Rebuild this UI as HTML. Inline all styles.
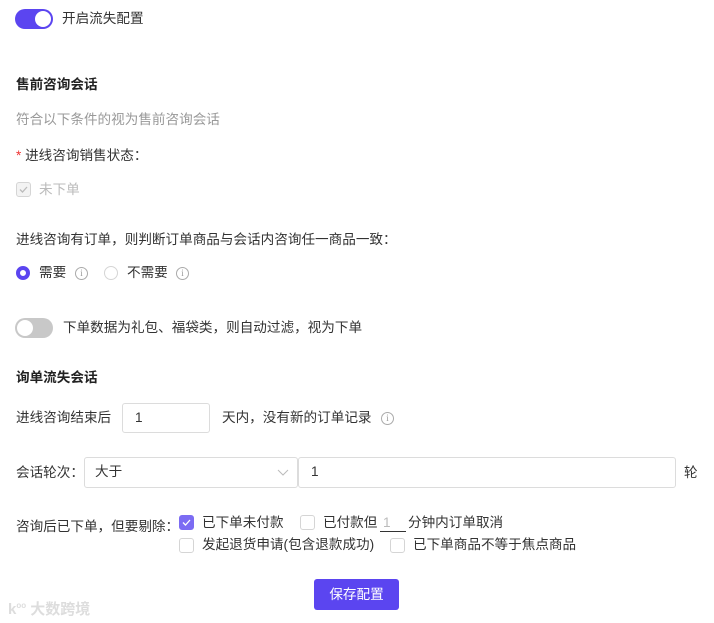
<!DOCTYPE html>
<html><head><meta charset="utf-8"><style>
*{box-sizing:border-box;margin:0;padding:0}
body{width:714px;height:623px;background:#fff;position:relative;overflow:hidden;font-family:"Liberation Sans","Noto Sans CJK SC",sans-serif;font-size:13.6px;color:#333}
.a{position:absolute;white-space:nowrap;line-height:18px}
.b{font-weight:bold;color:#222}
.g{color:#999}
.sw{position:absolute;width:38px;height:20px;border-radius:10px}
.sw i{position:absolute;top:2px;width:16px;height:16px;border-radius:50%;background:#fff}
.cb{position:absolute;width:15px;height:15px;border:1px solid #d5d5d5;border-radius:3px;background:#fff}
.info{position:absolute;width:13px;height:13px;border:1px solid #aaa;border-radius:50%;font-size:9px;line-height:11px;text-align:center;color:#999;font-family:"Liberation Serif",serif}
.inp{position:absolute;border:1px solid #dcdcdc;border-radius:3px;background:#fff;line-height:28px;padding-left:12px;color:#333}
</style></head><body>
<div class="sw" style="left:15px;top:9px;background:#5b45f0"><i style="left:20px"></i></div>
<div class="a" style="left:62px;top:10px;color:#333">开启流失配置</div>

<div class="a b" style="left:16px;top:76px">售前咨询会话</div>
<div class="a g" style="left:16px;top:111px">符合以下条件的视为售前咨询会话</div>
<div class="a" style="left:16px;top:147px"><span style="color:#e33">*</span> 进线咨询销售状态：</div>
<div class="cb" style="left:16px;top:182px;background:#f3f3f3"><svg width="13" height="13" style="position:absolute;left:0;top:0"><path d="M3 6.5l2.5 2.5 4.5-5" stroke="#bbb" stroke-width="1.3" fill="none"/></svg></div>
<div class="a" style="left:39px;top:181px;color:#bbb">未下单</div>

<div class="a" style="left:16px;top:231px">进线咨询有订单，则判断订单商品与会话内咨询任一商品一致：</div>
<div style="position:absolute;left:16px;top:266px;width:14px;height:14px;border-radius:50%;border:4px solid #5b45f0;background:#fff"></div>
<div class="a" style="left:39px;top:264px">需要</div>
<div class="info" style="left:75px;top:267px">i</div>
<div style="position:absolute;left:104px;top:266px;width:14px;height:14px;border-radius:50%;border:1px solid #d5d5d5"></div>
<div class="a" style="left:127px;top:264px">不需要</div>
<div class="info" style="left:176px;top:267px">i</div>

<div class="sw" style="left:15px;top:318px;background:#c8c8c8"><i style="left:2px"></i></div>
<div class="a" style="left:63px;top:319px">下单数据为礼包、福袋类，则自动过滤，视为下单</div>

<div class="a b" style="left:16px;top:369px">询单流失会话</div>
<div class="a" style="left:16px;top:409px">进线咨询结束后</div>
<div class="inp" style="left:122px;top:403px;width:88px;height:30px">1</div>
<div class="a" style="left:222px;top:409px">天内，没有新的订单记录</div>
<div class="info" style="left:381px;top:412px">i</div>

<div class="a" style="left:16px;top:464px">会话轮次：</div>
<div class="inp" style="left:84px;top:457px;width:214px;height:31px;padding-left:10px">大于
<svg width="12" height="8" style="position:absolute;right:8px;top:11px"><path d="M1 1l5 5 5-5" stroke="#bbb" fill="none"/></svg></div>
<div class="inp" style="left:298px;top:457px;width:378px;height:31px;padding-left:12px">1</div>
<div class="a" style="left:684px;top:464px">轮</div>

<div class="a" style="left:16px;top:518px">咨询后已下单，但要剔除：</div>
<div class="cb" style="left:179px;top:515px;background:#7c6cf3;border-color:#7c6cf3"><svg width="13" height="13" style="position:absolute;left:0;top:0"><path d="M3 6.5l2.5 2.5 4.5-5" stroke="#fff" stroke-width="1.3" fill="none"/></svg></div>
<div class="a" style="left:202px;top:514px">已下单未付款</div>
<div class="cb" style="left:300px;top:515px"></div>
<div class="a" style="left:323px;top:514px">已付款但</div>
<div style="position:absolute;left:380px;top:531px;width:26px;border-top:1px solid #333"></div>
<div class="a" style="left:383px;top:514px;color:#bbb">1</div>
<div class="a" style="left:408px;top:514px">分钟内订单取消</div>
<div class="cb" style="left:179px;top:538px"></div>
<div class="a" style="left:202px;top:536px">发起退货申请(包含退款成功)</div>
<div class="cb" style="left:390px;top:538px"></div>
<div class="a" style="left:413px;top:536px">已下单商品不等于焦点商品</div>

<div style="position:absolute;left:314px;top:579px;width:85px;height:31px;background:#5b45f0;border-radius:3px;color:#fff;text-align:center;line-height:31px">保存配置</div>

<div class="a" style="left:8px;top:597px;color:#ddd;font-size:15px;font-weight:bold">k<sup style="font-size:8px">oo</sup> 大数跨境</div>
</body></html>
